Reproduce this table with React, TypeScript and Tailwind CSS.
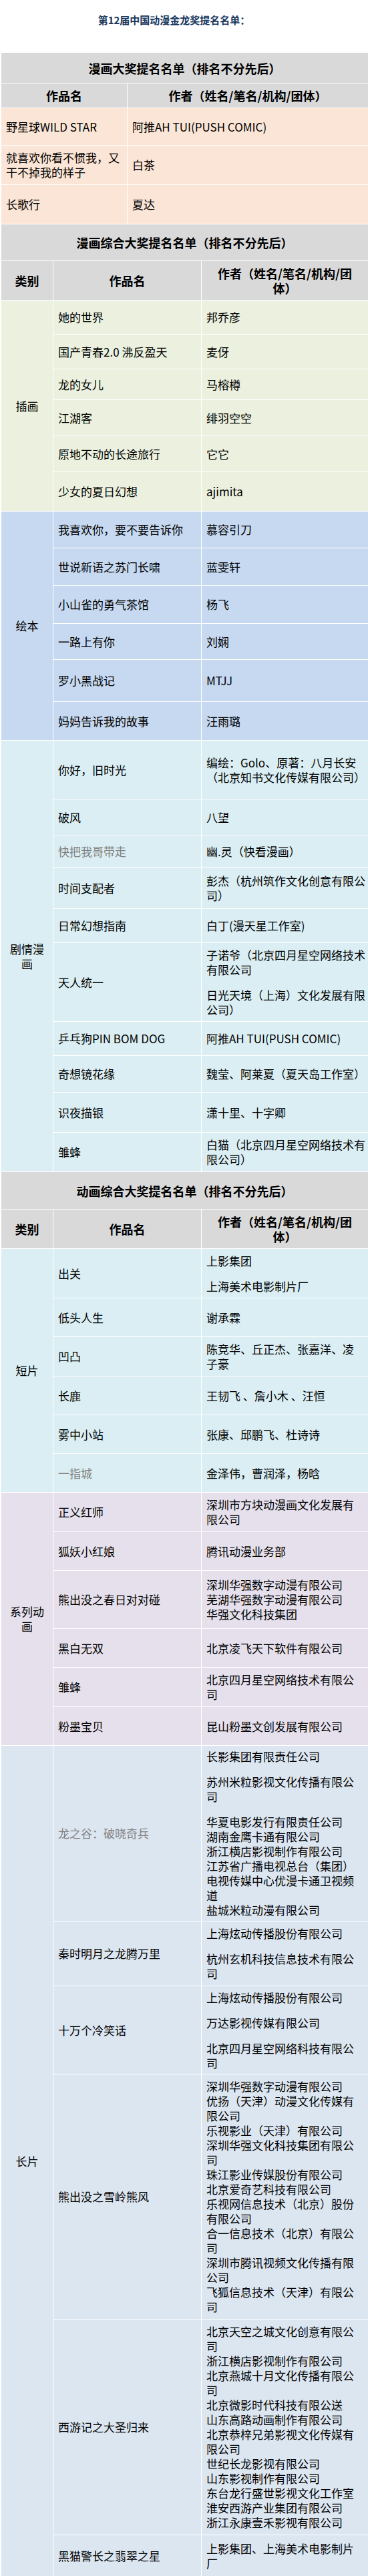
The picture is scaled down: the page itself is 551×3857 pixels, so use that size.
import React from 'react';

interface Row {
  work: string;
  h: string;
  authors: string[][];
  gray?: boolean;
}

interface Section {
  name: string;
  bg: string;
  rows: Row[];
}

const COMIC_GRAND: { work: string; author: string; h: string }[] = [
  { work: '野星球WILD STAR', author: '阿推AH TUI(PUSH COMIC)', h: 'h-[55px]' },
  { work: '就喜欢你看不惯我，又\n干不掉我的样子', author: '白茶', h: 'h-[58px]' },
  { work: '长歌行', author: '夏达', h: 'h-[58px]' },
];

const COMIC_SECTIONS: Section[] = [
  {
    name: '插画',
    bg: 'bg-[#ebf1de]',
    rows: [
      { work: '她的世界', authors: [['邦乔彦']], h: 'h-[50px]' },
      { work: '国产青春2.0 沸反盈天', authors: [['麦伢']], h: 'h-[51px]' },
      { work: '龙的女儿', authors: [['马榕樽']], h: 'h-[45px]' },
      { work: '江湖客', authors: [['绯羽空空']], h: 'h-[53px]' },
      { work: '原地不动的长途旅行', authors: [['它它']], h: 'h-[53px]' },
      { work: '少女的夏日幻想', authors: [['ajimita']], h: 'h-[58px]' },
    ],
  },
  {
    name: '绘本',
    bg: 'bg-[#c6d9f1]',
    rows: [
      { work: '我喜欢你，要不要告诉你', authors: [['慕容引刀']], h: 'h-[54px]' },
      { work: '世说新语之苏门长啸', authors: [['蓝雯轩']], h: 'h-[55px]' },
      { work: '小山雀的勇气茶馆', authors: [['杨飞']], h: 'h-[56px]' },
      { work: '一路上有你', authors: [['刘娴']], h: 'h-[53px]' },
      { work: '罗小黑战记', authors: [['MTJJ']], h: 'h-[62px]' },
      { work: '妈妈告诉我的故事', authors: [['汪雨璐']], h: 'h-[57px]' },
    ],
  },
  {
    name: '剧情漫\n画',
    bg: 'bg-[#daeef3]',
    rows: [
      { work: '你好，旧时光', authors: [['编绘：Golo、原著：八月长安', '（北京知书文化传媒有限公司）']], h: 'h-[87px]' },
      { work: '破风', authors: [['八望']], h: 'h-[54px]' },
      { work: '快把我哥带走', authors: [['幽.灵（快看漫画）']], h: 'h-[46px]', gray: true },
      { work: '时间支配者', authors: [['彭杰（杭州筑作文化创意有限公', '司）']], h: 'h-[61px]' },
      { work: '日常幻想指南', authors: [['白丁(漫天星工作室)']], h: 'h-[50px]' },
      {
        work: '天人统一',
        authors: [
          ['子诺爷（北京四月星空网络技术', '有限公司'],
          ['日光天境（上海）文化发展有限', '公司）'],
        ],
        h: 'h-[117px]',
      },
      { work: '乒乓狗PIN BOM DOG', authors: [['阿推AH TUI(PUSH COMIC)']], h: 'h-[50px]' },
      { work: '奇想镜花缘', authors: [['魏莹、阿莱夏（夏天岛工作室）']], h: 'h-[54px]' },
      { work: '识夜描银', authors: [['潇十里、十字卿']], h: 'h-[59px]' },
      { work: '雏蜂', authors: [['白猫（北京四月星空网络技术有', '限公司）']], h: 'h-[58px]' },
    ],
  },
];

const ANIME_SECTIONS: Section[] = [
  {
    name: '短片',
    bg: 'bg-[#daeef3]',
    rows: [
      { work: '出关', authors: [['上影集团'], ['上海美术电影制片厂']], h: 'h-[73px]' },
      { work: '低头人生', authors: [['谢承霖']], h: 'h-[57px]' },
      { work: '凹凸', authors: [['陈竞华、丘正杰、张嘉洋、凌', '子豪']], h: 'h-[58px]' },
      { work: '长鹿', authors: [['王韧飞 、詹小木 、汪恒']], h: 'h-[57px]' },
      { work: '雾中小站', authors: [['张康、邱鹏飞、杜诗诗']], h: 'h-[57px]' },
      { work: '一指城', authors: [['金泽伟，曹润泽，杨晗']], h: 'h-[57px]', gray: true },
    ],
  },
  {
    name: '系列动\n画',
    bg: 'bg-[#e5e0ec]',
    rows: [
      { work: '正义红师', authors: [['深圳市方块动漫画文化发展有', '限公司']], h: 'h-[58px]' },
      { work: '狐妖小红娘', authors: [['腾讯动漫业务部']], h: 'h-[57px]' },
      {
        work: '熊出没之春日对对碰',
        authors: [['深圳华强数字动漫有限公司', '芜湖华强数字动漫有限公司', '华强文化科技集团']],
        h: 'h-[86px]',
      },
      { work: '黑白无双', authors: [['北京凌飞天下软件有限公司']], h: 'h-[57px]' },
      { work: '雏蜂', authors: [['北京四月星空网络技术有限公', '司']], h: 'h-[58px]' },
      { work: '粉墨宝贝', authors: [['昆山粉墨文创发展有限公司']], h: 'h-[57px]' },
    ],
  },
  {
    name: '长片',
    bg: 'bg-[#dce6f1]',
    rows: [
      {
        work: '龙之谷：破晓奇兵',
        gray: true,
        authors: [
          ['长影集团有限责任公司'],
          ['苏州米粒影视文化传播有限公', '司'],
          [
            '华夏电影发行有限责任公司',
            '湖南金鹰卡通有限公司',
            '浙江横店影视制作有限公司',
            '江苏省广播电视总台（集团）',
            '电视传媒中心优漫卡通卫视频',
            '道',
            '盐城米粒动漫有限公司',
          ],
        ],
        h: 'h-[262px]',
      },
      {
        work: '秦时明月之龙腾万里',
        authors: [['上海炫动传播股份有限公司'], ['杭州玄机科技信息技术有限公', '司']],
        h: 'h-[96px]',
      },
      {
        work: '十万个冷笑话',
        authors: [['上海炫动传播股份有限公司'], ['万达影视传媒有限公司'], ['北京四月星空网络科技有限公', '司']],
        h: 'h-[131px]',
      },
      {
        work: '熊出没之雪岭熊风',
        authors: [
          [
            '深圳华强数字动漫有限公司',
            '优扬（天津）动漫文化传媒有',
            '限公司',
            '乐视影业（天津）有限公司',
            '深圳华强文化科技集团有限公',
            '司',
            '珠江影业传媒股份有限公司',
            '北京爱奇艺科技有限公司',
            '乐视网信息技术（北京）股份',
            '有限公司',
            '合一信息技术（北京）有限公',
            '司',
            '深圳市腾讯视频文化传播有限',
            '公司',
            '飞狐信息技术（天津）有限公',
            '司',
          ],
        ],
        h: 'h-[366px]',
      },
      {
        work: '西游记之大圣归来',
        authors: [
          [
            '北京天空之城文化创意有限公',
            '司',
            '浙江横店影视制作有限公司',
            '北京燕城十月文化传播有限公',
            '司',
            '北京微影时代科技有限公送',
            '山东高路动画制作有限公司',
            '北京恭梓兄弟影视文化传媒有',
            '限公司',
            '世纪长龙影视有限公司',
            '山东影视制作有限公司',
            '东台龙行盛世影视文化工作室',
            '淮安西游产业集团有限公司',
            '浙江永康壹禾影视有限公司',
          ],
        ],
        h: 'h-[322px]',
      },
      { work: '黑猫警长之翡翠之星', authors: [['上影集团、上海美术电影制片', '厂']], h: 'h-[61px]' },
    ],
  },
];

const Authors = ({ paras }: { paras: string[][] }) => (
  <div className="flex flex-col gap-4">
    {paras.map((p, i) => (
      <div key={i}>
        {p.map((line, j) => (
          <div key={j} className="whitespace-nowrap">
            {line}
          </div>
        ))}
      </div>
    ))}
  </div>
);

const TableTitle = ({ text, h }: { text: string; h: string }) => (
  <div className={`${h} flex items-center justify-center bg-[#d9d9d9] text-[18px] font-bold`}>{text}</div>
);

const ColumnHeads = () => (
  <div className="flex h-[58px] gap-px bg-white text-[18px] font-bold">
    <div className="flex w-[77px] shrink-0 items-center justify-center bg-[#d9d9d9]">类别</div>
    <div className="flex w-[221px] shrink-0 items-center justify-center bg-[#d9d9d9]">作品名</div>
    <div className="flex flex-1 items-center justify-center bg-[#d9d9d9] text-center">
      <div>
        <div className="whitespace-nowrap">作者（姓名/笔名/机构/团</div>
        <div>体）</div>
      </div>
    </div>
  </div>
);

const SectionBlock = ({ section }: { section: Section }) => (
  <div className="flex gap-px">
    <div className={`flex w-[77px] shrink-0 items-center justify-center whitespace-pre-line text-center ${section.bg}`}>
      {section.name}
    </div>
    <div className="flex flex-1 flex-col gap-px">
      {section.rows.map((row) => (
        <div key={row.work + row.h} className={`flex gap-px ${row.h}`}>
          <div
            className={`flex w-[221px] shrink-0 items-center px-[7px] ${section.bg} ${row.gray ? 'text-[#808080]' : ''}`}
          >
            {row.work}
          </div>
          <div className={`flex flex-1 items-center px-[7px] ${section.bg}`}>
            <Authors paras={row.authors} />
          </div>
        </div>
      ))}
    </div>
  </div>
);

const App = () => {
  return (
    <div className="min-h-screen overflow-hidden bg-white font-['Noto_Sans_CJK_SC','Noto_Sans',sans-serif] text-[17px] leading-[22px] text-black">
      {/* page title */}
      <div className="flex h-[79px] justify-center pt-[19px] pr-[30px]">
        <h1 className="text-[15px] font-bold text-[#17365d]">第12届中国动漫金龙奖提名名单：</h1>
      </div>

      <div className="flex flex-col gap-px pl-[2px]">
        {/* 漫画大奖 */}
        <div className="flex flex-col gap-px">
          <TableTitle text="漫画大奖提名名单（排名不分先后）" h="h-[45px]" />
          <div className="flex h-[36px] gap-px text-[18px] font-bold">
            <div className="flex w-[188px] shrink-0 items-center justify-center bg-[#d9d9d9]">作品名</div>
            <div className="flex flex-1 items-center justify-center bg-[#d9d9d9]">作者（姓名/笔名/机构/团体）</div>
          </div>
          {COMIC_GRAND.map((r) => (
            <div key={r.work} className={`flex gap-px ${r.h}`}>
              <div className="flex w-[188px] shrink-0 items-center whitespace-pre-line bg-[#fbe5d6] px-[7px]">
                {r.work}
              </div>
              <div className="flex flex-1 items-center bg-[#fbe5d6] px-[7px]">{r.author}</div>
            </div>
          ))}
        </div>

        {/* 漫画综合大奖 */}
        <div className="flex flex-col gap-px">
          <TableTitle text="漫画综合大奖提名名单（排名不分先后）" h="h-[54px]" />
          <ColumnHeads />
          {COMIC_SECTIONS.map((s) => (
            <SectionBlock key={s.name} section={s} />
          ))}
        </div>

        {/* 动画综合大奖 */}
        <div className="flex flex-col gap-px">
          <TableTitle text="动画综合大奖提名名单（排名不分先后）" h="h-[55px]" />
          <ColumnHeads />
          {ANIME_SECTIONS.map((s) => (
            <SectionBlock key={s.name} section={s} />
          ))}
        </div>
      </div>
    </div>
  );
};

export default App;
